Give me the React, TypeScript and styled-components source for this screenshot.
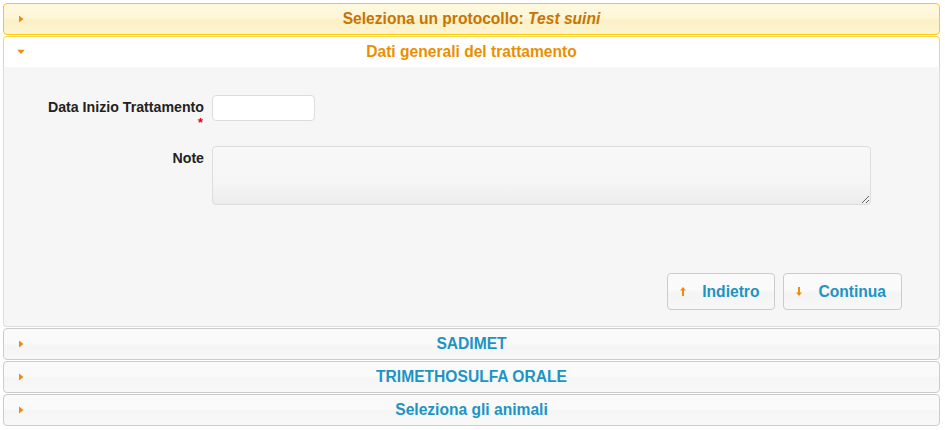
import React from "react";
import styled, { createGlobalStyle, css } from "styled-components";

type HeaderState = "default" | "hover" | "active";

const GlobalStyle = createGlobalStyle`
  html, body {
    margin: 0;
    padding: 0;
    background: #ffffff;
  }
  body {
    font-family: "Liberation Sans", Arial, sans-serif;
    font-size: 14px;
    color: #222222;
  }
  * {
    box-sizing: border-box;
  }
`;

const Accordion = styled.div`
  width: 945px;
  padding: 3px 5px 4px 3px;
  display: flex;
  flex-direction: column;
  gap: 1px;
`;

const Section = styled.div`
  display: flex;
  flex-direction: column;
`;

const headerLook = {
  default: css`
    border-color: #cccccc;
    color: #1c94c4;
    background: linear-gradient(
      #fafafa 0%,
      #fafafa 45%,
      #f5f5f5 55%,
      #f8f8f8 100%
    );
  `,
  hover: css`
    border-color: #fbcb09;
    color: #c77405;
    background: linear-gradient(
      #fef8de 0%,
      #fdf6d8 45%,
      #fbf0c5 55%,
      #fdf4d2 100%
    );
  `,
  active: css`
    height: 31px;
    border-color: #fbd850;
    border-bottom: 0;
    border-radius: 4px 4px 0 0;
    color: #eb8f00;
    background: #ffffff;
  `,
};

const Header = styled.div<{ $state: HeaderState }>`
  position: relative;
  height: 32px;
  border: 1px solid;
  border-radius: 4px;
  display: flex;
  align-items: center;
  justify-content: center;
  font-size: 15.6px;
  font-weight: 700;
  cursor: pointer;
  ${(p) => headerLook[p.$state]}

  em {
    font-style: italic;
  }
`;

const HeaderIcon = styled.svg`
  position: absolute;
  left: 15px;
  top: 50%;
  transform: translateY(-50%);
`;

const Content = styled.div`
  height: 260px;
  border: 1px solid #dddddd;
  border-top: 0;
  border-radius: 0 0 4px 4px;
  background: #f6f6f6;
  padding: 28px 37px 16px 0;
  display: flex;
  flex-direction: column;
`;

const FormRow = styled.div<{ $gapAfter?: number }>`
  display: grid;
  grid-template-columns: 200px 1fr;
  column-gap: 8px;
  align-items: start;
  margin-bottom: ${(p) => p.$gapAfter ?? 0}px;
`;

const Label = styled.label`
  text-align: right;
  font-weight: 700;
  font-size: 14.2px;
  line-height: 16px;
  padding-top: 4px;
  color: #222222;
`;

const Required = styled.span`
  display: block;
  color: #e3001b;
  font-size: 13px;
  line-height: 16px;
  padding-right: 1px;
`;

const TextInput = styled.input`
  width: 103px;
  height: 26px;
  border: 1px solid #dddddd;
  border-radius: 4px;
  background: #ffffff;
  font: inherit;
  padding: 2px 5px;
  outline: none;
`;

const NoteArea = styled.textarea`
  width: 659px;
  height: 59px;
  border: 1px solid #dddddd;
  border-radius: 4px;
  background: linear-gradient(#f7f7f7 0%, #f6f6f6 60%, #ececec 100%);
  font: inherit;
  padding: 4px 6px;
  outline: none;
  display: block;
`;

const ButtonBar = styled.div`
  margin-top: 68px;
  display: flex;
  justify-content: flex-end;
  gap: 8px;
`;

const Button = styled.button`
  height: 37px;
  border: 1px solid #cccccc;
  border-radius: 4px;
  background: linear-gradient(
    #fafafa 0%,
    #fafafa 45%,
    #f4f4f4 55%,
    #f7f7f7 100%
  );
  color: #1c94c4;
  font-family: inherit;
  font-size: 15.6px;
  font-weight: 700;
  padding: 0 15px 0 12px;
  display: flex;
  align-items: center;
  gap: 16px;
  cursor: pointer;
`;

const ORANGE = "#ef8c08";

const TriangleRight = () => (
  <HeaderIcon width="5" height="7" viewBox="0 0 5 7">
    <polygon points="0,0 4.5,3.5 0,7" fill={ORANGE} />
  </HeaderIcon>
);

const TriangleDown = () => (
  <HeaderIcon width="8" height="5" viewBox="0 0 8 5" style={{ left: 13 }}>
    <polygon points="0,0 8,0 4,4.5" fill={ORANGE} />
  </HeaderIcon>
);

const Arrow = ({ up }: { up?: boolean }) => (
  <svg width="6" height="9" viewBox="0 0 6 9">
    <g transform={up ? undefined : "rotate(180 3 4.5)"}>
      <polygon points="3,0 6,3.5 0,3.5" fill={ORANGE} />
      <rect x="2" y="3" width="2" height="6" fill={ORANGE} />
    </g>
  </svg>
);

const App = () => {
  return (
    <>
      <GlobalStyle />
      <Accordion>
        <Header $state="hover">
          <TriangleRight />
          <span>
            Seleziona un protocollo: <em>Test suini</em>
          </span>
        </Header>

        <Section>
          <Header $state="active">
            <TriangleDown />
            Dati generali del trattamento
          </Header>
          <Content>
            <FormRow $gapAfter={15}>
              <Label htmlFor="dataInizio">
                Data Inizio Trattamento
                <Required>*</Required>
              </Label>
              <TextInput id="dataInizio" type="text" />
            </FormRow>
            <FormRow>
              <Label htmlFor="note">Note</Label>
              <NoteArea id="note" />
            </FormRow>
            <ButtonBar>
              <Button>
                <Arrow up />
                Indietro
              </Button>
              <Button>
                <Arrow />
                Continua
              </Button>
            </ButtonBar>
          </Content>
        </Section>

        <Header $state="default">
          <TriangleRight />
          SADIMET
        </Header>
        <Header $state="default">
          <TriangleRight />
          TRIMETHOSULFA ORALE
        </Header>
        <Header $state="default">
          <TriangleRight />
          Seleziona gli animali
        </Header>
      </Accordion>
    </>
  );
};

export default App;
